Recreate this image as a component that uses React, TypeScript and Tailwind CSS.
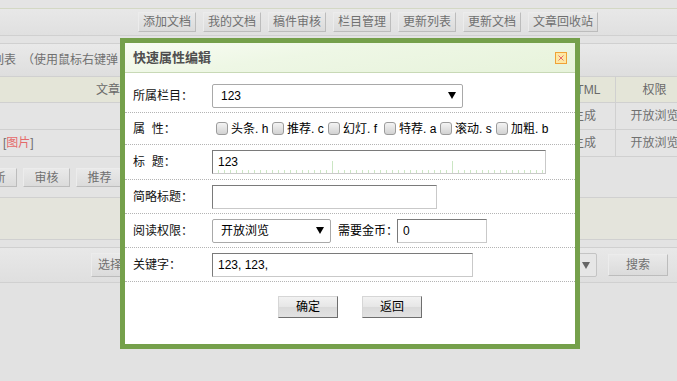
import React from "react";

const font = "font-['Liberation_Sans','Noto_Sans_CJK_SC',sans-serif]";

function BgButton({ children, className = "" }: { children: React.ReactNode; className?: string }) {
  return (
    <div
      className={`flex shrink-0 items-center justify-center whitespace-nowrap border border-t-[#ececec] border-l-[#ececec] border-r-[#bcbcbc] border-b-[#bcbcbc] bg-[linear-gradient(#e9e9e9,#dbdbdb)] text-[12px] text-[#707070] ${className}`}
    >
      {children}
    </div>
  );
}

function Arrow({ color = "#000" }: { color?: string }) {
  return (
    <svg width="8" height="7" viewBox="0 0 8 7" className="shrink-0">
      <path d="M0 0h8L4 7z" fill={color} />
    </svg>
  );
}

function FakeSelect({ value, className = "" }: { value: string; className?: string }) {
  return (
    <div
      className={`flex h-[24px] shrink-0 items-center justify-between rounded-[2px] border border-[#a9a9a9] bg-white pl-[8px] pr-[6px] text-[12px] text-black ${className}`}
    >
      <span>{value}</span>
      <Arrow />
    </div>
  );
}

function TextBox({ value, className = "" }: { value: string; className?: string }) {
  return (
    <input
      readOnly
      defaultValue={value}
      className={`h-[24px] shrink-0 border border-t-[#7a7a7a] border-l-[#7a7a7a] border-r-[#c9c9c9] border-b-[#c9c9c9] bg-white pl-[5px] text-[12px] text-black outline-none ${className}`}
    />
  );
}

function Row({ label, children, className }: { label: React.ReactNode; children?: React.ReactNode; className: string }) {
  return (
    <div className={`flex items-center border-b border-dotted border-[#b4b4b4] ${className}`}>
      <div className="w-[87px] shrink-0 whitespace-nowrap pl-[8px] text-[12px] text-[#111]">{label}</div>
      <div className="flex flex-1 items-center">{children}</div>
    </div>
  );
}

const flags = [
  ["头条", "h"],
  ["推荐", "c"],
  ["幻灯", "f"],
  ["特荐", "a"],
  ["滚动", "s"],
  ["加粗", "b"],
];

function ModalButton({ children }: { children: React.ReactNode }) {
  return (
    <button
      type="button"
      className="flex h-[22px] w-[60px] items-center justify-center border border-t-[#d6d6d6] border-l-[#d6d6d6] border-r-[#6e6e6e] border-b-[#6e6e6e] bg-[linear-gradient(#f2f2f2_0%,#e6e6e6_50%,#dadada_51%,#e2e2e2_100%)] text-[12px] text-black"
    >
      {children}
    </button>
  );
}

export default function App() {
  return (
    <div className={`relative h-[381px] w-[677px] overflow-hidden bg-[#e2e2e2] ${font}`}>
      {/* dimmed page behind */}
      <div className="h-[9px] border-b border-[#d3d8c4] bg-[#e4e4e4]" />
      <div className="flex h-[27px] items-start gap-[7px] border-b border-[#d0d0d0] bg-[linear-gradient(#e8e8e8,#e0e0e0)] pl-[138px] pt-[3px]">
        {["添加文档", "我的文档", "稿件审核", "栏目管理", "更新列表", "更新文档"].map((t) => (
          <BgButton key={t} className="h-[20px] w-[58px]">
            {t}
          </BgButton>
        ))}
        <BgButton className="h-[20px] w-[70px]">文章回收站</BgButton>
      </div>
      <div className="h-[8px] border-b border-[#d0d0d0] bg-[#e3e3e3]" />
      <div className="flex h-[33px] items-center border-b border-[#d0d0d0] bg-[linear-gradient(#e9e9e9,#dedede)] text-[12px] text-[#707070]">
        <span className="-ml-[8px] whitespace-nowrap">列表　（使用鼠标右键弹</span>
      </div>
      <div className="flex h-[26px] items-center border-b border-[#d0d0d0] bg-[#e4e5d8] text-[12px] text-[#6a6a6a]">
        <div className="w-[553px] shrink-0 pl-[96px]">文章</div>
        <div className="w-[62px] shrink-0 text-center">HTML</div>
        <div className="flex h-full w-[78px] shrink-0 items-center justify-center border-l border-[#d0d0d0]">权限</div>
      </div>
      {[false, true].map((pic, i) => (
        <div key={i} className="flex h-[27px] items-center border-b border-[#d0d0d0] bg-[#e4e4e4] text-[12px] text-[#707070]">
          <div className="w-[553px] shrink-0 pl-[3px]">
            {pic && (
              <span>
                [<span className="text-[#e46a6a]">图片</span>]
              </span>
            )}
          </div>
          <div className="w-[62px] shrink-0 text-center">生成</div>
          <div className="flex h-full w-[78px] shrink-0 items-center justify-center whitespace-nowrap border-l border-[#d0d0d0]">
            开放浏览
          </div>
        </div>
      ))}
      <div className="flex h-[41px] items-start gap-[6px] border-b border-[#d0d0d0] bg-[#e3e3e3] pt-[11px]">
        <BgButton className="-ml-[30px] h-[19px] w-[47px]">更新</BgButton>
        <BgButton className="h-[19px] w-[47px]">审核</BgButton>
        <BgButton className="h-[19px] w-[47px]">推荐</BgButton>
      </div>
      <div className="h-[42px] border-b border-[#d0d0d0] bg-[#e4e4dc]" />
      <div className="h-[8px] border-b border-[#d0d0d0] bg-[#e3e3e3]" />
      <div className="flex h-[35px] items-center border-b border-[#d0d0d0] bg-[linear-gradient(#e8e8e8,#dfdfdf)] text-[12px] text-[#707070]">
        <BgButton className="ml-[91px] h-[24px] w-[80px] justify-start pl-[6px]">选择</BgButton>
        <div className="ml-[240px] flex h-[24px] w-[186px] items-center justify-end rounded-[2px] border border-[#c4c4c4] bg-[#e6e6e6] pr-[6px]">
          <Arrow color="#666" />
        </div>
        <BgButton className="ml-[11px] h-[22px] w-[60px]">搜索</BgButton>
      </div>

      {/* quick property edit dialog */}
      <div className="absolute left-[120px] top-[38px] h-[311px] w-[460px] border-[5px] border-[#75a04b] bg-white">
        <div className="flex h-[30px] items-center justify-between border-b border-[#c8d9b6] bg-[linear-gradient(172deg,#f8fcf3_0%,#eef7e5_40%,#e7f3db_100%)] pl-[8px] pr-[8px]">
          <span className="text-[13px] font-bold text-[#4f4f4f]">快速属性编辑</span>
          <svg width="12" height="12" viewBox="0 0 12 12">
            <rect x="0.5" y="0.5" width="11" height="11" fill="#fde8a4" stroke="#f0a236" />
            <path d="M3.5 3.5l5 5M8.5 3.5l-5 5" stroke="#e46a6a" strokeWidth="1" />
          </svg>
        </div>

        <Row label="所属栏目：" className="h-[40px] pt-[6px]">
          <FakeSelect value="123" className="w-[251px]" />
        </Row>
        <Row label={<>属&nbsp;&nbsp;性：</>} className="h-[32px]">
          <div className="flex pl-[4px] text-[12px] text-black">
            {flags.map(([cn, k]) => (
              <label key={k} className="flex w-[56px] shrink-0 items-center gap-[3px] whitespace-nowrap">
                <input
                  type="checkbox"
                  className="h-[13px] w-[12px] appearance-none rounded-[3px] border border-[#9c9c9c] bg-[linear-gradient(#f4f4f4,#d2d2d2)]"
                />
                <span>
                  {cn}.&nbsp;{k}
                </span>
              </label>
            ))}
          </div>
        </Row>
        <Row label={<>标&nbsp;&nbsp;题：</>} className="h-[35px]">
          <TextBox
            value="123"
            className="w-[334px] bg-no-repeat [background-image:repeating-linear-gradient(90deg,transparent_0_5px,#cbe6c3_5px_6px),repeating-linear-gradient(90deg,transparent_0_119px,#cbe6c3_119px_120px)] [background-position:0_100%,0_100%] [background-size:100%_3px,100%_12px]"
          />
        </Row>
        <Row label="简略标题：" className="h-[34px]">
          <TextBox value="" className="w-[225px]" />
        </Row>
        <Row label="阅读权限：" className="h-[34px]">
          <FakeSelect value="开放浏览" className="w-[119px]" />
          <span className="ml-[7px] w-[59px] shrink-0 whitespace-nowrap text-[12px] text-black">需要金币：</span>
          <TextBox value="0" className="w-[90px]" />
        </Row>
        <Row label="关键字：" className="h-[34px]">
          <TextBox value="123, 123," className="w-[261px]" />
        </Row>
        <div className="flex justify-center gap-[24px] pt-[14px]">
          <ModalButton>确定</ModalButton>
          <ModalButton>返回</ModalButton>
        </div>
      </div>
    </div>
  );
}
